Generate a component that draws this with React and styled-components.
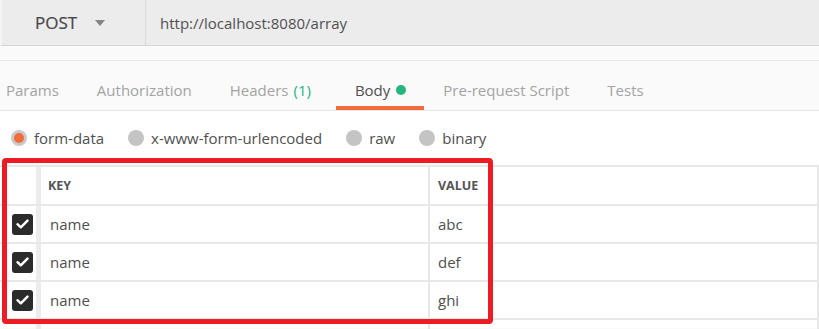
import React from "react";
import styled, { createGlobalStyle } from "styled-components";

const GlobalStyle = createGlobalStyle`
  body {
    margin: 0;
    background: #ffffff;
    font-family: "Open Sans", "Noto Sans", sans-serif;
    color: #505050;
  }
`;

const tabs = [
  { label: "Params" },
  { label: "Authorization" },
  { label: "Headers", count: "(1)" },
  { label: "Body", active: true, dot: true },
  { label: "Pre-request Script" },
  { label: "Tests" },
];

const bodyTypes = ["form-data", "x-www-form-urlencoded", "raw", "binary"];

const rows = [
  { key: "name", value: "abc" },
  { key: "name", value: "def" },
  { key: "name", value: "ghi" },
];

const App = () => {
  return (
    <Page>
      <GlobalStyle />
      <TopBar>
        <MethodSelect>
          POST
          <Caret />
        </MethodSelect>
        <UrlInput>http://localhost:8080/array</UrlInput>
      </TopBar>
      <TabStrip>
        <TabList>
          {tabs.map((t) => (
            <Tab key={t.label} $active={t.active}>
              {t.label}
              {t.count && <Count>{t.count}</Count>}
              {t.dot && <Dot />}
            </Tab>
          ))}
        </TabList>
      </TabStrip>
      <RadioRow>
        {bodyTypes.map((type, i) => (
          <RadioItem key={type}>
            <Radio $checked={i === 0} />
            {type}
          </RadioItem>
        ))}
      </RadioRow>
      <TableWrap>
        <Table>
          <Row $header>
            <CheckCell />
            <KeyCell $header>KEY</KeyCell>
            <ValueCell $header>VALUE</ValueCell>
          </Row>
          {rows.map((r) => (
            <Row key={r.value}>
              <CheckCell>
                <CheckBox>
                  <svg width="13" height="10" viewBox="0 0 13 10">
                    <path
                      d="M1.5 5.2 L4.8 8.3 L11.5 1.6"
                      fill="none"
                      stroke="#ffffff"
                      strokeWidth="2.4"
                      strokeLinecap="round"
                      strokeLinejoin="round"
                    />
                  </svg>
                </CheckBox>
              </CheckCell>
              <KeyCell>{r.key}</KeyCell>
              <ValueCell>{r.value}</ValueCell>
            </Row>
          ))}
          <Row>
            <CheckCell />
            <KeyCell />
            <ValueCell />
          </Row>
        </Table>
        <Highlight />
      </TableWrap>
    </Page>
  );
};

const Page = styled.div`
  width: 819px;
  height: 329px;
  overflow: hidden;
  background: #fafafa;
`;

const TopBar = styled.div`
  display: flex;
  height: 45px;
  background: #ececec;
  border-bottom: 1px solid #d5d5d5;
  border-left: 2px solid #f4f4f4;
`;

const MethodSelect = styled.div`
  display: flex;
  align-items: center;
  width: 110px;
  padding-left: 33px;
  border-right: 1px solid #dadada;
  font-size: 17px;
  font-weight: 400;
  color: #474747;
  -webkit-text-stroke: 0.2px #474747;
`;

const Caret = styled.span`
  margin-left: 18px;
  margin-top: 1px;
  width: 0;
  height: 0;
  border-left: 5px solid transparent;
  border-right: 5px solid transparent;
  border-top: 6px solid #858585;
`;

const UrlInput = styled.div`
  display: flex;
  align-items: center;
  padding-left: 14px;
  font-size: 15px;
  color: #505050;
`;

const TabStrip = styled.div`
  margin-top: 14px;
  border-top: 1px solid #e8e8e8;
  border-bottom: 1px solid #e6e6e6;
  background: #fafafa;
`;

const TabList = styled.div`
  display: flex;
  margin-left: -13px;
`;

const Tab = styled.div`
  display: flex;
  align-items: center;
  padding: 19px 19px 6px;
  line-height: 20px;
  font-size: 15px;
  color: ${(p) => (p.$active ? "#505050" : "#a3a3a3")};
  border-bottom: 4px solid ${(p) => (p.$active ? "#f26b3a" : "transparent")};
`;

const Count = styled.span`
  margin-left: 5px;
  margin-right: 6px;
  color: #26b47f;
`;

const Dot = styled.span`
  margin-left: 6px;
  margin-right: -1px;
  width: 10px;
  height: 10px;
  border-radius: 50%;
  background: #26b47f;
`;

const RadioRow = styled.div`
  display: flex;
  align-items: center;
  gap: 24px;
  height: 54px;
  padding-left: 11px;
  background: #ffffff;
`;

const RadioItem = styled.label`
  display: flex;
  align-items: center;
  gap: 7px;
  font-size: 15px;
  color: #505050;
`;

const Radio = styled.span`
  box-sizing: border-box;
  width: 16px;
  height: 16px;
  border-radius: 50%;
  background: ${(p) => (p.$checked ? "#f26b3a" : "#c4c4c4")};
  border: ${(p) => (p.$checked ? "3px solid #c9c9c9" : "none")};
`;

const TableWrap = styled.div`
  position: relative;
  background: #ffffff;
  height: 163px;
`;

const Table = styled.div`
  border-top: 2px solid #e8e8e8;
  border-right: 2px solid #e8e8e8;
`;

const Row = styled.div`
  display: grid;
  grid-template-columns: 41px 389px 1fr;
  height: ${(p) => (p.$header ? "37px" : "36px")};
  border-bottom: 2px solid #e8e8e8;
`;

const CheckCell = styled.div`
  display: flex;
  align-items: center;
  justify-content: center;
  padding-left: 9px;
  border-right: 5px solid #ececec;
`;

const CheckBox = styled.span`
  display: flex;
  align-items: center;
  justify-content: center;
  width: 21px;
  height: 21px;
  border-radius: 3px;
  background: #2b2b2b;
`;

const KeyCell = styled.div`
  display: flex;
  align-items: center;
  padding-left: ${(p) => (p.$header ? "7px" : "9px")};
  border-right: 2px solid #e8e8e8;
  font-size: ${(p) => (p.$header ? "12.5px" : "15px")};
  font-weight: ${(p) => (p.$header ? 700 : 400)};
  color: ${(p) => (p.$header ? "#555555" : "#505050")};
`;

const ValueCell = styled(KeyCell)`
  padding-left: 8px;
  border-right: none;
`;

const Highlight = styled.div`
  position: absolute;
  left: 2px;
  top: -7px;
  width: 481px;
  height: 156px;
  border: 5px solid #ed1c24;
  border-radius: 4px;
  pointer-events: none;
`;

export default App;
